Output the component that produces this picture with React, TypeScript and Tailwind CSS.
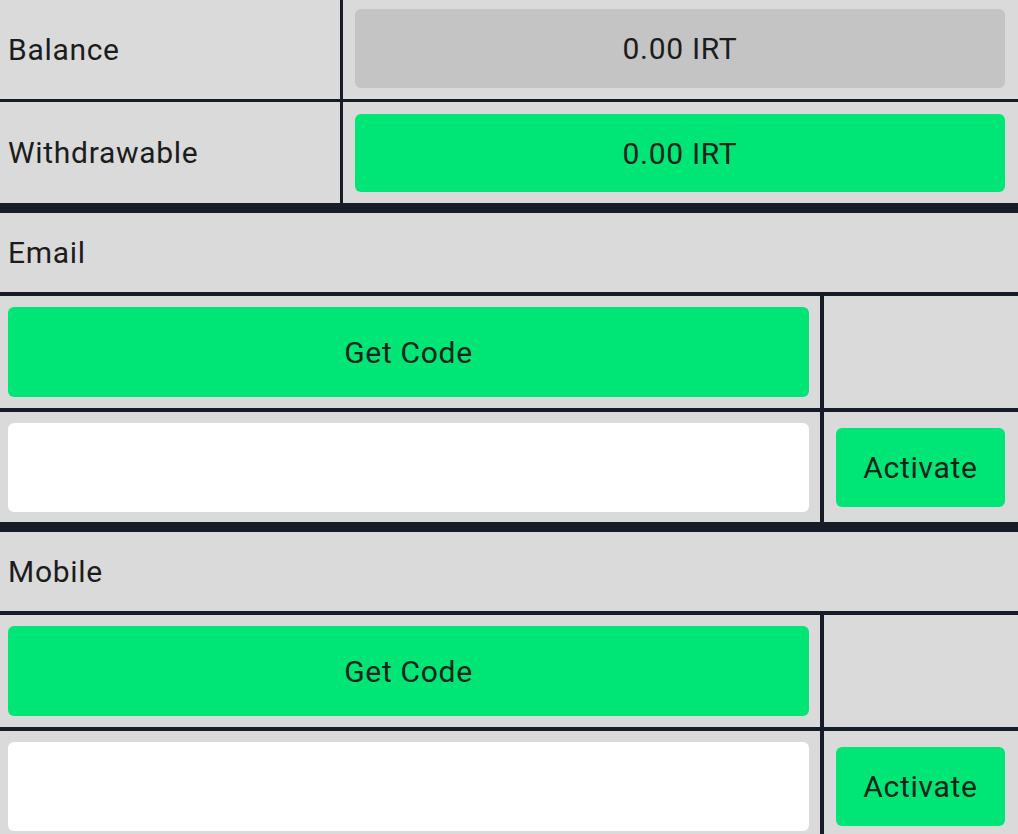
const line = 'border-[#161d27]';

function CodeBlock({ title, last }: { title: string; last?: boolean }) {
  return (
    <div>
      <div className={`flex h-[83px] items-center border-b-4 ${line} pl-2`}>{title}</div>
      <div className={`flex h-[116px] border-b-4 ${line}`}>
        <div className={`w-[824px] border-r-4 ${line} pl-2 pt-[11px] pr-[11px]`}>
          <button type="button" className="flex h-[90px] w-full items-center justify-center rounded-md bg-[#00e676] text-[#10241a]">
            Get Code
          </button>
        </div>
        <div className="flex-1" />
      </div>
      <div className={`flex h-[120px] ${last ? '' : `border-b-[10px] ${line}`}`}>
        <div className={`w-[824px] border-r-4 ${line} pl-2 pt-[11px] pr-[11px]`}>
          <input className="h-[89px] w-full rounded-md bg-white outline-none" />
        </div>
        <div className="flex flex-1 items-start pt-[16px] pl-3 pr-[13px]">
          <button type="button" className="flex h-[79px] w-full items-center justify-center rounded-md bg-[#00e676] text-[#10241a]">
            Activate
          </button>
        </div>
      </div>
    </div>
  );
}

export default function App() {
  return (
    <div className="h-[834px] w-[1018px] overflow-hidden bg-[#dadada] font-['Roboto',sans-serif] text-[30px] tracking-[0.7px] text-[#1c1c1c]">
      <div className={`flex h-[102px] border-b-[3px] ${line}`}>
        <div className={`flex w-[343px] items-center border-r-[3px] ${line} pl-2`}>Balance</div>
        <div className="flex-1 pl-3 pr-[13px] pt-[9px]">
          <div className="flex h-[79px] items-center justify-center rounded-md bg-[#c4c4c4]">0.00 IRT</div>
        </div>
      </div>
      <div className={`flex h-[111px] border-b-[10px] ${line}`}>
        <div className={`flex w-[343px] items-center border-r-[3px] ${line} pl-2`}>Withdrawable</div>
        <div className="flex-1 pl-3 pr-[13px] pt-[12px]">
          <div className="flex h-[78px] items-center justify-center rounded-md bg-[#00e676] text-[#10241a]">0.00 IRT</div>
        </div>
      </div>
      <CodeBlock title="Email" />
      <CodeBlock title="Mobile" last />
    </div>
  );
}
